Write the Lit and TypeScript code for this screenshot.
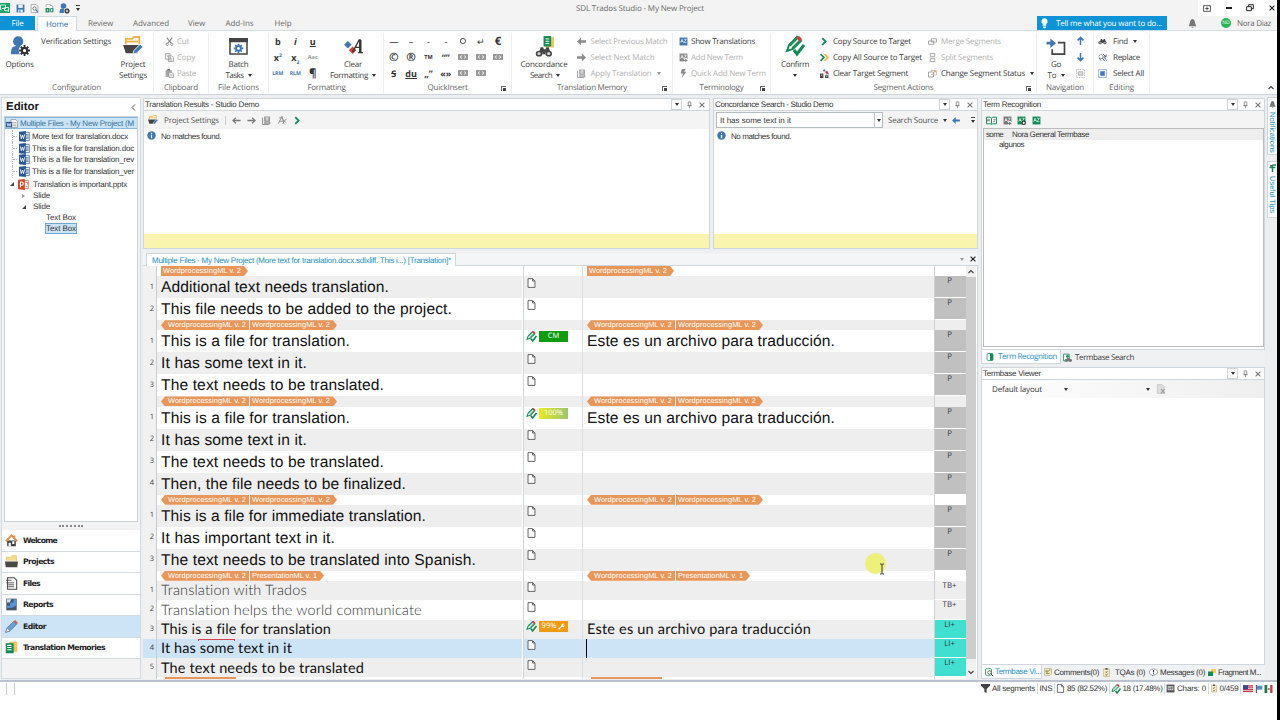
import { LitElement, css, html, svg, nothing } from 'lit';
import { customElement, property } from 'lit/decorators.js';
import { classMap } from 'lit/directives/class-map.js';

const pen = document.createElement('canvas').getContext('2d') as any;
const UI = '"Open Sans", "Noto Sans", sans-serif';
const SANS = '"Liberation Sans", Arial, sans-serif';
const SLIDE = 'Lato, sans-serif';

// Text that keeps the given width, whatever the font's own advance is
const fit = (text: string, width: number, cls = 'ui', font = `8px ${UI}`) => {
  pen.textRendering = 'geometricPrecision';
  pen.font = font;
  const gap = (width - pen.measureText(text).width) / text.length;
  return html`<span class="t ${cls}" style="width:${width}px;letter-spacing:${gap.toFixed(3)}px">${text}</span>`;
};
const small = (text: string, width: number, cls = '') => fit(text, width, 'small ' + cls, `8px ${SANS}`);

const G = '#158a57';
const B = '#3f76b3';

const binoculars = svg`<path d="M5 8 7 1h3l1 3h2l1-3h3l2 7z" fill="#444"/><circle cx="5" cy="10" r="4" fill="#444"/><circle cx="17" cy="10" r="4" fill="#444"/><circle cx="5" cy="10" r="2" fill="#ddd"/><circle cx="17" cy="10" r="2" fill="#ddd"/><path d="M9 7h4v4H9z" fill="#444"/>`;
const gear = (c: string) => svg`<circle cx="10" cy="10" r="5" fill="none" stroke=${c} stroke-width="4"/><path d="M10 0v4M10 16v4M0 10h4M16 10h4M3 3l3 3M14 14l3 3M3 17l3-3M14 6l3-3" stroke=${c} stroke-width="3.4"/>`;
const pencil = svg`<path d="M2 15 4 9 12 1l4 4-8 8z" fill="#fff" stroke="#158a57" stroke-width="2"/><path d="m5 10 7-7M7 12l7-7" stroke="#158a57" stroke-width="1.3"/><path d="m11 2 3-2 3 3-2 3z" fill="#c9413c"/><path d="m9 14 3 4 7-9" fill="none" stroke="#158a57" stroke-width="3"/>`;
const book = (c: string) => svg`<path d="M1 1h14v14H1z" fill=${c}/><path d="m3 10 2.4-6L8 10M4 8h3M9 4h4l-4 6h4" fill="none" stroke="#fff" stroke-width="1.2"/>`;
const arrowL = (c: string) => svg`<path d="M0 5 5 0v3.5h6v3H5V10z" fill=${c}/>`;
const arrowR = (c: string) => svg`<path d="M11 5 6 0v3.5H0v3h6V10z" fill=${c}/>`;

const ART: Record<string, [string, unknown]> = {
  logo: ['0 0 20 20', svg`<path d="M0 0h20v20H0z" fill="#1ba668"/><path d="M1 4h10v7H4l-3 3zM9 9h8v8l-3-2H9z" fill="#1ba668" stroke="#fff" stroke-width="1.6"/>`],
  save: ['0 0 16 16', svg`<path d="M1 1h14v14H1z" fill="#3f76b3"/><path d="M4 1h8v6H4z" fill="#f3f3f3"/><path d="M4 10h8v5H4z" fill="#f3f3f3"/><path d="M6 11h2v4H6z" fill="#3f76b3"/>`],
  preview: ['0 0 16 16', svg`<path d="M2 1h9l3 3v11H2z" fill="#fff" stroke="#777"/><circle cx="8" cy="8" r="3" fill="none" stroke="#555" stroke-width="1.4"/><path d="m10 10 4 5" stroke="#3f76b3" stroke-width="2"/>`],
  update: ['0 0 16 16', svg`<path d="M2 5V1h8l4 4v9" fill="#fff" stroke="#888"/><path d="M1 7h7v8H1z" fill="#158a57"/><path d="M3 11h3M4.5 9v4" stroke="#fff"/><path d="M10 8h4v6h-4z" fill="none" stroke="#158a57" stroke-width="1.6"/><path d="m8 4 2-2 2 2" fill="none" stroke="#3f76b3"/>`],
  user: ['0 0 22 22', svg`<circle cx="9" cy="6" r="5.6" fill="#3f76b3"/><path d="M1 20c0-9 3-9 8-9s7 1 7 9z" fill="#3f76b3"/><circle cx="16" cy="16" r="6.5" fill="#fff"/><g transform="translate(10 10) scale(.6)">${gear('#333')}</g>`],
  folder: ['0 0 22 20', svg`<path d="M3 8V2h7l2-2h6v8" fill="#fff" stroke="#e8b64a" stroke-width="2"/><path d="M2 5h15" stroke="#e8b64a" stroke-width="2"/><path d="M0 9h18l-2 9H3z" fill="#444"/><path d="m11 19 1-4 7-7 3 3-7 7z" fill="#3f76b3" stroke="#fff"/>`],
  folderNav: ['0 0 18 18', svg`<path d="M2 8V3h6l2-2h6v7" fill="#f2dc92" stroke="#e3c25e"/><path d="M0 9h18l-1 8H1z" fill="#4a4a42"/>`],
  cut: ['0 0 16 16', svg`<path d="m3 1 8 10M13 1 5 11" stroke="#777" stroke-width="2"/><circle cx="4" cy="13" r="2" fill="none" stroke="#777" stroke-width="1.5"/><circle cx="12" cy="13" r="2" fill="none" stroke="#777" stroke-width="1.5"/>`],
  copy: ['0 0 16 16', svg`<path d="M1 1h8v10H1zM6 5h6l3 3v7H6z" fill="#fff" stroke="#888" stroke-width="1.5"/><path d="M3 4h4M3 6h3M8 9h5M8 11h5M8 13h5" stroke="#888"/>`],
  paste: ['0 0 16 16', svg`<path d="M1 2h11v12H1z" fill="#999"/><path d="M4 0h5v3H4z" fill="#666"/><path d="M7 6h5l3 3v6H7z" fill="#fff" stroke="#888" stroke-width="1.5"/><path d="M9 10h4M9 12h4" stroke="#888"/>`],
  batch: ['0 0 20 18', svg`<path d="M1 1h18v16H1z" fill="#fff" stroke="#444" stroke-width="1.6"/><path d="M0 0h20v4.5H0z" fill="#444"/><g transform="translate(5 6) scale(.5)">${gear(B)}</g>`],
  clear: ['0 0 20 16', svg`<path d="m4 2 4 4-4 4-4-4z" fill="#3f76b3"/><path d="m9 8 4 4-4 4-4-4z" fill="#c9413c"/><path d="m9 14 7-13h1v13M12 9h5M15 14.5h5" fill="none" stroke="#333" stroke-width="1.4"/><path d="M16 1h2.5v13H16z" fill="#333"/>`],
  circle: ['0 0 8 8', svg`<circle cx="4" cy="4" r="2.6" fill="none" stroke="#555"/>`],
  chip: ['0 0 20 12', svg`<path d="M0 0h20v12H0z" fill="#999"/><path d="M8 3 4 6l4 3M12 3l4 3-4 3" fill="none" stroke="#fff" stroke-width="1.6"/>`],
  concord: ['0 0 20 22', svg`<path d="M11 1h9v11h-9z" fill="#efc75e"/><path d="M9 0h8v11H9z" fill="#158a57"/><path d="M11 3h4M11 5.5h4M11 8h4" stroke="#fff"/><g transform="translate(0 11) scale(.85 .75)">${binoculars}</g>`],
  binoc: ['0 0 22 14', binoculars],
  left: ['0 0 11 10', arrowL('#777')],
  right: ['0 0 11 10', arrowR('#777')],
  leftBlue: ['0 0 11 10', arrowL(B)],
  apply: ['0 0 16 16', svg`<path d="M4 1h10v9H4z" fill="#888"/><path d="M6 3h6M6 5h6M6 7h6M9 2v7" stroke="#fff"/><path d="M1 3v12h11M5 11h9v3H5z" fill="none" stroke="#777" stroke-width="1.4"/>`],
  az: ['0 0 16 16', book(B)],
  azGray: ['0 0 16 16', svg`${book('#777')}<path d="M12 9v7M9 12.5h7" stroke="#fff" stroke-width="4"/><path d="M12 10v6M9 13h6" stroke="#777" stroke-width="2"/>`],
  azGear: ['0 0 16 16', svg`${book(G)}<circle cx="12" cy="12" r="3" fill="#fff" stroke="#333" stroke-width="2"/>`],
  azGreen: ['0 0 16 16', book(G)],
  bookOpen: ['0 0 20 16', svg`<path d="M1 2h7l2 2 2-2h7v12h-7l-2 1-2-1H1zM10 4v10" fill="#fff" stroke="#158a57" stroke-width="1.8"/><path d="M3 10V6h3v4M3 8h3M13 6h4l-4 4h4" fill="none" stroke="#555"/>`],
  flash: ['0 0 16 16', svg`<path d="M5 0h7L9 5h4L5 16l2-8H3z" fill="#777"/>`],
  confirm: ['0 0 20 20', pencil],
  chev: ['0 0 16 16', svg`<path d="m4 2 6 6-6 6" fill="none" stroke="#158a57" stroke-width="3.2"/>`],
  chev2: ['0 0 16 16', svg`<path d="m8 2 6 6-6 6" fill="none" stroke="#e8b64a" stroke-width="3"/><path d="m1 2 6 6-6 6" fill="none" stroke="#158a57" stroke-width="3"/>`],
  clearSeg: ['0 0 16 16', svg`<path d="M0 8h6v8H0zM9 11h6v5H9z" fill="#444"/><path d="M2 10h2v2H2zM11 13h2v1h-2z" fill="#fff"/><path d="m5 2 3-2 2 3-3 2z" fill="#3f76b3"/><path d="m9 5 4-2 2 4-3 3z" fill="#c9413c"/><path d="m12 8 3-1 1 3z" fill="#3f76b3"/>`],
  merge: ['0 0 16 12', svg`<path d="M6 1h9v6H6zM1 5h9v6H1z" fill="#fff" stroke="#888" stroke-width="1.5"/>`],
  split: ['0 0 16 16', svg`<path d="M4 1h8v5H4zM4 10h8v5H4z" fill="#fff" stroke="#888" stroke-width="1.5"/><path d="M1 8h14" stroke="#bbb" stroke-dasharray="2 1"/>`],
  status: ['0 0 18 16', svg`<path d="M6 2h11v9H6z" fill="#fff" stroke="#999"/><path d="M1 5h10v10H1z" fill="#fff" stroke="#777" stroke-width="1.3"/><circle cx="14" cy="4" r="2" fill="#e8a04a"/><path d="M7 10h3" stroke="#777"/>`],
  goto: ['0 0 20 18', svg`<path d="M6 12v5h13V5h-7" fill="none" stroke="#444" stroke-width="1.8"/><path d="M0 4h4V.5l6 5-6 5V7H0z" fill="#3f76b3"/>`],
  up: ['0 0 12 16', svg`<path d="M6 0 12 6 10 8 7.3 5.5V15H4.7V5.5L2 8 0 6z" fill="#3f76b3"/>`],
  down: ['0 0 12 16', svg`<path d="M6 16 12 10 10 8 7.3 10.5V1H4.7v9.5L2 8 0 10z" fill="#3f76b3"/>`],
  region: ['0 0 16 16', svg`<path d="M1 1h14v14H1z" fill="none" stroke="#666" stroke-dasharray="1.5 1.5"/><path d="M4 5h8v6H4z" fill="#ddd" stroke="#888"/>`],
  selectAll: ['0 0 16 16', svg`<path d="M1 1h14v14H1z" fill="none" stroke="#3f76b3" stroke-width="1.5" stroke-dasharray="2 1.5"/><path d="M4 4h8v8H4z" fill="#3f76b3"/>`],
  replace: ['0 0 18 16', svg`<circle cx="6" cy="6" r="4" fill="none" stroke="#555" stroke-width="1.5" stroke-dasharray="3 1"/><path d="m9 9 4 6M10 1l6 6M16 2v5h-5" stroke="#555" stroke-width="1.8" fill="none"/><path d="m2 9 4 5M13 8l4 6" stroke="#3f76b3" stroke-width="2"/>`],
  bulb: ['0 0 12 18', svg`<path d="M6 0a5.5 5.5 0 0 1 3 10v3H3v-3A5.5 5.5 0 0 1 6 0zM3.5 14h5v2l-1 1h-3l-1-1z" fill="#fff"/>`],
  bell: ['0 0 16 16', svg`<path d="M8 0c5 1 4 7 6 11l1 2H1l1-2C4 7 3 1 8 0zM6 14h4l-2 2z" fill="#777"/>`],
  word: ['0 0 16 16', svg`<path d="M8 2h7v12H8z" fill="#fff" stroke="#2b579a"/><path d="M10 5h4M10 7h4M10 9h4M10 11h4" stroke="#2b579a"/><path d="M0 1 10 0v16L0 15z" fill="#2b579a"/><path d="m2 5 1.4 6L5 6l1.6 5L8 5" stroke="#fff" stroke-width="1.3" fill="none"/>`],
  wordSet: ['0 0 22 16', svg`<path d="M9 1h9l3 3v11H9z" fill="#fff" stroke="#666"/><path d="M11 6h8M11 9h8M11 12h8" stroke="#777"/><path d="M0 5h11v10H0z" fill="#2b579a"/><path d="m2 7 1.6 6L5.5 8l2 5L9 7" stroke="#fff" stroke-width="1.3" fill="none"/>`],
  ppt: ['0 0 16 16', svg`<path d="M8 2h7v12H8z" fill="#fff" stroke="#d24726"/><path d="M11 5h3v3M11 11h3" stroke="#d24726" fill="none"/><path d="M0 1 10 0v16L0 15z" fill="#d24726"/><path d="M3.5 12V4.5h2a2 2 0 0 1 0 4.5h-2" stroke="#fff" stroke-width="1.5" fill="none"/>`],
  info: ['0 0 16 16', svg`<circle cx="8" cy="8" r="7.5" fill="#3f76b3"/><path d="M8 6.5V13M8 3v2.2" stroke="#fff" stroke-width="2.2"/>`],
  arrowThinL: ['0 0 14 12', svg`<path d="M6 1 1 6l5 5M1 6h13" fill="none" stroke="#777" stroke-width="2.2"/>`],
  arrowThinR: ['0 0 14 12', svg`<path d="m8 1 5 5-5 5M13 6H0" fill="none" stroke="#777" stroke-width="2.2"/>`],
  crossA: ['0 0 16 16', svg`<path d="M2 14 8 2l3 12M4 10h7M3 5c3-2 5 0 11 7M9 14l6-8" fill="none" stroke="#888" stroke-width="1.4"/>`],
  pin: ['0 0 8 12', svg`<path d="M2 1h4v6H2zM0.5 7h7M4 7v4" fill="none" stroke="#777" stroke-width="1.2"/>`],
  close: ['0 0 10 10', svg`<path d="m1 1 8 8M9 1 1 9" stroke="currentColor" stroke-width="1.9"/>`],
  home: ['0 0 18 18', svg`<path d="M3 9h12v8H3z" fill="#444"/><path d="M10 10h3v4h-3zM5 12h3v5H5z" fill="#fff"/><path d="m1 10 8-8 8 8M13 2v4" fill="none" stroke="#e2904f" stroke-width="2.6"/>`],
  files: ['0 0 18 20', svg`<path d="M3 1h10l4 4v14H3z" fill="#fff" stroke="#444" stroke-width="1.6"/><path d="M1 5h8M1 9h12M4 12h9M4 15h9" stroke="#444" stroke-width="1.3"/>`],
  reports: ['0 0 18 20', svg`<path d="M1 1h16v18H1z" fill="#45566b"/><path d="M1 12h6V7h5V2h5v9l-7 4H1z" fill="#5a93d4"/><path d="M2 2h7l-3 5H2z" fill="#cfe0f2"/>`],
  editor: ['0 0 18 18', svg`<path d="m1 17 2-6L12 2l4 4-9 9z" fill="#6d9fd2" stroke="#3f6da5"/><path d="m3 11 4 4-6 2z" fill="#eee" stroke="#666" stroke-width=".7"/><path d="m12 2 2-2 4 4-2 2z" fill="#d55a4f"/>`],
  memories: ['0 0 18 18', svg`<path d="M6 1h11v14H6z" fill="#efc75e"/><path d="M1 3h11v14H1z" fill="#158a57"/><path d="M3 6h6M3 9h6M3 12h6" stroke="#fff" stroke-width="1.5"/>`],
  page: ['0 0 9 11', svg`<path d="M.7.7h5l2.6 2.6v7H.7zM5.7.7v2.6h2.6" fill="#fff" stroke="#555"/>`],
  wrench: ['0 0 10 10', svg`<path d="m1 9 5-5" stroke="#fff" stroke-width="2"/><path d="M9 1 7 3l1 1 2-1a3 3 0 0 1-5 2 3 3 0 0 1 4-4z" fill="#fff"/>`],
  term: ['0 0 14 16', svg`<path d="M1 3c0-3 12-3 12 0v10c0 3-12 3-12 0z" fill="#fff" stroke="#158a57" stroke-width="1.5"/><path d="M7 1h6v14H7z" fill="#158a57"/>`],
  termSearch: ['0 0 16 16', svg`<path d="M1 2h10v12H1z" fill="#fff" stroke="#158a57" stroke-width="1.5"/><circle cx="8" cy="6" r="2.5" fill="#158a57"/><circle cx="6" cy="13" r="3" fill="#777"/><circle cx="13" cy="13" r="3" fill="#777"/><path d="M7 9h5v4H7z" fill="#777"/>`],
  viewer: ['0 0 16 16', svg`<path d="M1 3c0-3 12-3 12 0v10c0 3-12 3-12 0z" fill="#fff" stroke="#158a57" stroke-width="1.6"/><circle cx="9" cy="9" r="3.5" fill="#fff" stroke="#444" stroke-width="1.5"/><path d="m12 12 4 4" stroke="#444" stroke-width="2"/>`],
  note: ['0 0 16 16', svg`<path d="M1 1h14v11l-3 3H1z" fill="#f6e9ae" stroke="#999"/><path d="M4 4v4h4V4M10 4h3M4 11h7" stroke="#555" fill="none" stroke-width="1.3"/>`],
  tqa: ['0 0 12 16', svg`<path d="M1 2h10v13H1z" fill="#f9f0cf" stroke="#b59a4a"/><path d="M4 0h4v3H4z" fill="#555"/><path d="m4 7 2 1 2-3M4 12l2 1 2-3" fill="none" stroke="#444" stroke-width="1.2"/>`],
  message: ['0 0 18 16', svg`<path d="M9 1c11 0 10 12 1 12l-3 2v-2C-2 12-1 1 9 1z" fill="#fff" stroke="#666" stroke-width="1.2"/><path d="M9 3v5M9 9.5v2" stroke="#333" stroke-width="2"/>`],
  fragment: ['0 0 16 14', svg`<path d="M6 0h10v8H6z" fill="#f0cf52"/><path d="M0 5h10v9H0z" fill="#158a57"/>`],
  filter: ['0 0 16 16', svg`<path d="M0 0h16v3l-6 6v7l-4-2V9L0 3z" fill="#444"/>`],
  chars: ['0 0 16 16', svg`<path d="M1 1h14v14H1z" fill="#555"/><path d="M3 4h10v7H3z" fill="#ddd"/><path d="M5 6v3h2V6M9 6h2v3H9z" stroke="#333" fill="none"/>`],
  us: ['0 0 16 12', svg`<path d="M0 0h16v12H0z" fill="#f6dfe2"/><path d="M0 1h16M0 4h16M0 7h16M0 10h16" stroke="#c8394b" stroke-width="1.8"/><path d="M0 0h8v6.5H0z" fill="#3a4a8c"/>`],
  flagArrow: ['0 0 10 12', svg`<path d="M1 0v12" stroke="#444" stroke-width="1.5"/><path d="M2 1h8v6H2z" fill="#5a8ccc"/>`],
  mx: ['0 0 12 12', svg`<path d="M0 0h4.5v12H0z" fill="#1b7a4b"/><path d="M4.5 0h4v12h-4z" fill="#fff"/><path d="M8.5 0H12v12H8.5z" fill="#c8394b"/><circle cx="6.4" cy="6" r="1.5" fill="#8a6a3a"/>`],
  tips: ['0 0 12 14', svg`<path d="M6 14V2M6 2h6M6 6H1M6 6h5" stroke="#158a57" stroke-width="2.5"/><path d="M2 2h3v3H2z" fill="#555"/>`],
  ribbonOpt: ['0 0 14 12', svg`<path d="M1 1h12v10H1zM4 6h6M7 3v6" fill="none" stroke="#333" stroke-width="1.4"/>`],
  restore: ['0 0 12 12', svg`<path d="M4 4V1h7v6H8M1 4h7v6H1z" fill="none" stroke="#222" stroke-width="1.5"/>`],
  pageX: ['0 0 16 16', svg`<path d="M2 1h8l3 3v11H2z" fill="#ddd" stroke="#bbb"/><path d="m8 8 6 7M14 8l-6 7" stroke="#999" stroke-width="1.8"/>`],
  chevUp: ['0 0 6 5', svg`<path d="M.5 4 3 1.5 5.5 4" fill="none" stroke="#444" stroke-width="1.2"/>`],
  chevDown: ['0 0 6 5', svg`<path d="M.5 1 3 3.5 5.5 1" fill="none" stroke="#444" stroke-width="1.2"/>`],
  chevLeft: ['0 0 5 7', svg`<path d="M4 .5 1 3.5l3 3" fill="none" stroke="#444"/>`],
};

@customElement('ui-icon')
export class UiIcon extends LitElement {
  @property() name = '';
  @property({ type: Number }) w = 9;
  @property({ type: Number }) h = 9;

  static styles = css`
    :host { display: inline-flex; flex: none; }
    svg { display: block; overflow: visible; }
  `;

  render() {
    const art = ART[this.name];
    if (!art) return nothing;
    return html`<svg width=${this.w} height=${this.h} viewBox=${art[0]}>${art[1]}</svg>`;
  }
}

const icon = (name: string, w = 9, h = w) => html`<ui-icon name=${name} w=${w} h=${h}></ui-icon>`;
const caret = html`<i class="caret"></i>`;
const row = (name: string, text: string, w: number, off = false, drop = false) => html`
  <div class=${classMap({ cmd: true, off })}><span class="slot">${icon(name, 9)}</span>${fit(text, w)}${drop ? caret : nothing}</div>`;

type Seg = { n?: number; src?: string; sw?: number; dst?: string; dw?: number; tag?: string[]; st?: string; slide?: boolean; light?: boolean; active?: boolean; match?: string };
const WML = 'WordprocessingML v. 2';
const PML = 'PresentationML v. 1';
const SEGMENTS: Seg[] = [
  { tag: [WML] },
  { n: 1, src: 'Additional text needs translation.', sw: 228, st: 'P' },
  { n: 2, src: 'This file needs to be added to the project.', sw: 291, st: 'P' },
  { tag: [WML, WML] },
  { n: 1, src: 'This is a file for translation.', sw: 189, dst: 'Este es un archivo para traducción.', dw: 248, st: 'P', match: 'CM' },
  { n: 2, src: 'It has some text in it.', sw: 146, st: 'P' },
  { n: 3, src: 'The text needs to be translated.', sw: 223, st: 'P' },
  { tag: [WML, WML] },
  { n: 1, src: 'This is a file for translation.', sw: 189, dst: 'Este es un archivo para traducción.', dw: 248, st: 'P', match: '100%' },
  { n: 2, src: 'It has some text in it.', sw: 146, st: 'P' },
  { n: 3, src: 'The text needs to be translated.', sw: 223, st: 'P' },
  { n: 4, src: 'Then, the file needs to be finalized.', sw: 245, st: 'P' },
  { tag: [WML, WML] },
  { n: 1, src: 'This is a file for immediate translation.', sw: 265, st: 'P' },
  { n: 2, src: 'It has important text in it.', sw: 174, st: 'P' },
  { n: 3, src: 'The text needs to be translated into Spanish.', sw: 315, st: 'P' },
  { tag: [WML, PML] },
  { n: 1, src: 'Translation with Trados', sw: 146, st: 'TB+', slide: true, light: true },
  { n: 2, src: 'Translation helps the world communicate', sw: 261, st: 'TB+', slide: true, light: true },
  { n: 3, src: 'This is a file for translation', sw: 170, dst: 'Este es un archivo para traducción', dw: 224, st: 'LI+', slide: true, match: '99%' },
  { n: 4, src: 'It has some text in it', sw: 131, st: 'LI+', slide: true, active: true },
  { n: 5, src: 'The text needs to be translated', sw: 203, st: 'LI+', slide: true },
  { tag: [] },
];

const MATCH_CLASS: Record<string, string> = { CM: 'cm', '100%': 'full', '99%': 'fuzzy' };

@customElement('app-root')
export class AppRoot extends LitElement {
  static styles = css`
    :host {
      display: grid; grid-template: 95px 587px 38px / minmax(0, 1fr); width: 1280px; height: 720px; overflow: hidden;
      box-sizing: border-box; border-right: 3px solid #000; background: #fff; color: #3a3a3a; position: relative;
      font: 8px/11px "Open Sans", "Noto Sans", sans-serif; text-rendering: geometricPrecision;
    }
    * { box-sizing: border-box; }
    .t { display: inline-block; white-space: pre; flex: none; }
    .small { font: 8px/11px "Liberation Sans", Arial, sans-serif; color: #333; }
    .caret { width: 0; height: 0; border: 2px solid transparent; border-top: 3px solid #333; border-bottom: 0; margin-left: 5px; flex: none; }

    .title { height: 16px; background: #f3f3f3; display: grid; grid-template-columns: 576px 1fr 79px; }
    .quick { display: flex; align-items: center; gap: 5.5px; }
    .name { display: flex; align-items: center; color: #6c6c6c; }
    .win { background: #fff; display: flex; align-items: center; justify-content: space-between; padding: 0 2px 0 5px; color: #222; }
    .win b { width: 6px; height: 1.5px; background: #222; }
    .more { border-top: 1px solid #444; padding-top: 1.5px; }
    .more .caret { display: block; margin: 0; }
    .tabs { height: 15px; background: #f3f3f3; border-bottom: 1px solid #d5dde2; display: flex; align-items: stretch; color: #6c6c6c; }
    .tabs > div { display: flex; justify-content: center; align-items: center; }
    .tabs .file { width: 35px; background: #0e93d6; color: #fff; }
    .tabs .home { width: 40px; margin: 0 0 0 2px; background: #fff; border: 1px solid #cfd9e0; border-bottom: 0; color: #2f6fa8; height: 15px; }
    .w48 { width: 47px; } .w54 { width: 54px; } .w37 { width: 37px; } .w49 { width: 49px; } .w38 { width: 38px; }
    .tabs .tell { width: 130px; margin-left: 735px; background: #0e93d6; color: #fff; gap: 8px; justify-content: flex-start; padding-left: 4px; }
    .tabs .bell { width: 50px; }
    .tabs .me { gap: 6px; padding-left: 4px; color: #666; }
    .avatar { width: 10px; height: 10px; border-radius: 5px; background: #2bb457; color: #fff; font-size: 5px; line-height: 10px; text-align: center; }

    .ribbon { height: 64px; background: #fff; border-bottom: 1px solid #cdd3d8; padding-top: 2px; display: flex; position: relative; }
    .group { display: grid; grid-template-rows: 48px 12px; border-right: 1px solid #eceef0; height: 60px; }
    .body { display: grid; }
    .label { color: #666; text-align: center; position: relative; line-height: 14px; }
    .launch { position: absolute; right: 5px; top: 5px; width: 5px; height: 5px; border-top: 1px solid #666; border-left: 1px solid #666; background: linear-gradient(#444, #444) 100% 100% / 3px 3px no-repeat; }
    .config { width: 154px; } .config .body { grid-template-columns: 39px 74px 40px; }
    .clip { width: 55px; } .clip .body { padding-left: 11px; }
    .act { width: 60px; }
    .fmt { width: 115px; } .fmt .body { grid-template-columns: 53px 62px; }
    .qi { width: 128px; }
    .tm { width: 161px; } .tm .body { grid-template-columns: 64px 1fr; }
    .seg .slot { width: 13px; }
    .tm .slot { width: 14px; }
    .term { width: 98px; } .term .body { padding-left: 6px; }
    .seg { width: 266px; } .seg .body { grid-template-columns: 48px 108px 1fr; }
    .seg .rows { padding-left: 1px; }
    .nav { width: 57px; } .nav .body { grid-template-columns: 38px 10px; }
    .edit { width: 56px; } .edit .body { padding-left: 4px; } .edit .slot { width: 15px; }
    .rows { display: grid; grid-template-rows: 16px 16px 16px; align-items: center; }
    .tm .rows { padding-left: 1px; }
    .cmd { display: flex; align-items: center; }
    .cmd .slot { width: 12px; display: flex; }
    .edit .cmd .slot { width: 15px; }
    .seg .cmd .slot, .tm .cmd .slot { width: 13px; }
    .tm .cmd .t { margin-left: .5px; }
    .off { color: #b2b2b2; } .off .slot { opacity: .85; } .off .caret { border-top-color: #999; }
    .big { display: grid; grid-template-rows: 26px 11px 11px; justify-items: center; }
    .big > ui-icon { align-self: center; }
    .big > div { display: flex; align-items: center; height: 11px; }
    .big > div .caret { margin-left: 4px; }
    .big > div .caret:only-child { margin: 0; }
    .glyphs { display: grid; grid-template-rows: 16px 16px 16px; place-items: center; color: #333; font-size: 9px; }
    .g3 { grid-template-columns: repeat(3, 17.5px); }
    .g7 { grid-template-columns: repeat(7, 17.4px); padding-left: 1px; justify-content: start; }
    .glyphs .tiny { font-size: 5.5px; font-weight: 700; }
    .glyphs .lrm { color: #3f76b3; font-size: 5.2px; }
    .glyphs .aac { color: #999; }
    .glyphs sup, .glyphs sub { font-size: 5px; line-height: 0; color: #3f76b3; }
    .glyphs .big-g { font-size: 11.5px; }
    .arrows { display: grid; grid-template-rows: 16px 16px 16px; place-items: center; }
    .fold { position: absolute; right: 3px; bottom: 4px; display: flex; }

    .work { background: #eceef0; display: grid; grid-template-columns: 141px 837px 288px 11px; border-bottom: 2px solid #b9c3cf; padding: 2px 0 1px; }
    .side { background: #f3f3f3; margin-left: 1px; border: 1px solid #d3dae0; display: grid; grid-template-rows: 18px 406px 8px repeat(6, 21.5px) 1fr; }
    .side-head { background: #fff; display: flex; justify-content: space-between; align-items: center; padding: 0 4px 0 4px; }
    .bold12 { font: bold 11.5px/14px "Liberation Sans", Arial, sans-serif; color: #1a1a1a; }
    .tree { background: #fff; border: 1px solid #c9d0d6; margin: 0 2px; overflow: hidden; padding-top: .4px; }
    .node { height: 11.8px; display: flex; align-items: center; gap: 3px; }
    .node.root { background: #cbe4f5; border: 1px solid #86b9dc; height: 12px; margin: 0 -1px 1px 0; gap: 2px; }
    .node.root .t { color: #38729c; }
    .node.doc { padding-left: 5px; margin-left: 7px; border-left: 1px dotted #bbb; gap: 2px; }
    .node.doc::before { content: ''; width: 4px; margin-left: -5px; border-top: 1px dotted #bbb; }
    .node.ppt { padding-left: 5px; gap: 4px; height: 13px; }
    .node.slide { padding-left: 17px; height: 10.8px; gap: 7px; }
    .node.box { padding-left: 41px; height: 10.6px; }
    .node .pick { background: #cbe4f5; outline: 1px solid #6ea7cf; line-height: 9px; }
    .open { border-left: 4px solid transparent; border-bottom: 4px solid #444; }
    .shut { border: 2px solid transparent; border-left: 3px solid #999; border-right: 0; margin: 0 1px 0 0; }
    .dots { display: flex; justify-content: center; align-items: center; }
    .dots i { width: 24px; border-top: 2px dotted #888; }
    .navi { background: #fff; border-bottom: 1px solid #d3dae0; display: flex; align-items: center; padding-left: 3px; gap: 5px; }
    .navi.on { background: #cde4f6; }
    .navt { font: bold 7.7px/11px "DejaVu Sans", sans-serif; color: #222; }

    .mid { display: grid; grid-template-rows: 151px 4px 1fr; padding: 1px 0 0 2px; }
    .panes { display: grid; grid-template-columns: 567px 265px; gap: 3px; }
    .pane { background: #fff; border: 1px solid #d0d7dc; display: grid; grid-template-columns: minmax(0, 1fr); align-content: start; }
    .pane.fill { grid-template-rows: 12px 18px 1fr 14px; align-content: stretch; }
    .cap { height: 12px; border-bottom: 1px solid #d0d7dc; background: #fff; display: flex; align-items: center; padding-left: 1px; }
    .cap .btns { margin-left: auto; display: flex; align-items: center; gap: 7px; padding-right: 4px; color: #777; }
    .right .cap .btns { padding-right: 3px; }
    .drop { width: 11px; height: 11px; border: 1px solid #d0d7dc; display: flex; align-items: center; justify-content: center; margin-right: -2px; }
    .drop .caret { margin: 0; }
    .bar { background: #f4f4f4; display: flex; align-items: center; height: 18px; }
    .bar.res { padding-left: 4px; gap: 6px; color: #555; }
    .bar.res .sep { height: 9px; border-left: 1px solid #ccc; }
    .none { display: flex; align-items: flex-start; gap: 5px; padding: 2px 0 0 3px; }
    .yellow { background: #f9f4ae; }
    .bar.con { padding-left: 2px; color: #555; }
    .input { width: 167px; height: 16px; border: 1px solid #b5bcc2; background: #fff; display: flex; align-items: center; padding-left: 3px; }
    .input .dd { margin-left: auto; width: 8px; height: 14px; border-left: 1px solid #c5c5c5; display: flex; align-items: center; justify-content: center; }
    .input .dd .caret { margin: 0; }
    .bar.con .t + .caret { margin: 0 4px 0 5px; }
    .bar.con > .t { margin-left: 5px; }
    .bar.con .more { margin-left: auto; margin-right: 2px; }

    .doc-tabs { height: 13px; display: flex; background: #f4f5f6; border-bottom: 1px solid #d0d7dc; }
    .doc-tab { background: #fff; border: 1px solid #d0d7dc; border-bottom: 0; width: 310px; margin-left: 3px; height: 13px; padding-left: 5px; display: flex; align-items: center; }
    .doc-tab .t, .blue { color: #2490bb; }
    .doc-tabs .end { margin-left: auto; display: flex; align-items: center; gap: 6px; padding-right: 2px; color: #222; }
    .end .caret { border-top-color: #999; }
    .sheet { height: 413px; display: grid; grid-template-columns: 823px 10px; background: #fff; overflow: hidden; border-right: 1px solid #d0d7dc; position: relative; }
    .segs { overflow: hidden; height: 413px; }
    .sr { height: 22px; display: grid; grid-template-columns: 14px 365px 2px 59px 351px 32px; background: #fff; }
    .sr.alt { background: #eee; }
    .sr.slide { height: 19.3px; }
    .sr.tagrow { height: 10.2px; }
    .num { border-right: 1px solid #c8ccd0; background: #f1f1f1; display: flex; align-items: center; justify-content: flex-end; padding-right: 2px; font-size: 7.5px; color: #444; }
    .active .num { background: #cde3f6; }
    .sr.active { background: #cde3f6; }
    .src, .dst { display: flex; align-items: center; padding-left: 4px; color: #111; }
    .vline { border-left: 1px solid #fff; border-right: 1px solid #ccd8e0; background: #fff; }
    .stat { border-right: 1px solid #d8dfe4; display: flex; align-items: flex-start; padding: 1px 0 0 2px; gap: 2px; }
    .stat > ui-icon:only-child { margin: .5px 0 0 1px; }
    .arial { font: 15.6px/22px "Liberation Sans", Arial, sans-serif; position: relative; top: 1px; }
    .cali { font: 14.5px/19px Lato, sans-serif; position: relative; top: .4px; }
    .cali.light { font-weight: 300; color: #333; }
    .badge { width: 29px; height: 11px; color: #fff; font-size: 7.5px; line-height: 11px; text-align: center; display: flex; justify-content: center; align-items: center; gap: 2px; }
    .cm { background: #109c10; }
    .full { background: linear-gradient(90deg, #e9ec1d, #9cc470); }
    .fuzzy { background: #f09a10; }
    .p { border-left: 1px solid #d0d0d0; text-align: center; font-size: 7.8px; line-height: 10px; color: #334; padding-right: 2px; }
    .p.st { background: #c0c0c0; border-bottom: 1px solid #fff; }
    .p.tb { background: #eee; }
    .p.li { background: #40dfcf; }
    .tag { height: 10px; background: #e8965a; color: #fff; display: flex; align-items: center; }
    .tag .t { font: 7.4px/10px "Liberation Sans", Arial, sans-serif; color: #fff; }
    .tag.r { padding: 0 7px 0 2px; clip-path: polygon(0 0, calc(100% - 4px) 0, 100% 50%, calc(100% - 4px) 100%, 0 100%); }
    .tag.l { padding: 0 3px 0 7px; margin-right: 1px; clip-path: polygon(4px 0, 100% 0, 100% 100%, 4px 100%, 0 50%); }
    .stub { width: 71px; height: 10px; margin-left: 4px; background: #e8965a; align-self: start; }
    .text-cursor { width: 1px; height: 19px; background: #000; margin-left: -1px; }
    .mark { border: 1px solid #d4404c; border-bottom: 0; position: absolute; left: 55px; top: 373px; width: 37px; height: 2px; }
    .scroll { background: #cdcdcd; display: grid; grid-template-rows: 11px 1fr 20px; color: #444; }
    .scroll div { background: #f1f1f1; display: flex; align-items: center; justify-content: center; }
    .scroll div:last-child { align-items: flex-end; padding-bottom: 4px; }

    .right { display: grid; grid-template: 252px 14px 3px 298px 14px / minmax(0, 1fr); padding: 1px 1px 0 3px; }
    .bar.rec { padding-left: 4px; gap: 5.5px; }
    .list { border: 1px solid #bbb; height: 219px; margin: -1px 0 0 1px; }
    .hit { background: #eee; height: 11px; display: flex; align-items: center; gap: 9px; padding-left: 2px; }
    .sub { padding-left: 15px; display: flex; height: 9px; align-items: center; }
    .foot { display: flex; align-items: center; background: #f0f1f2; }
    .foot > div { display: flex; align-items: center; height: 14px; }
    .foot .sel { background: #fff; border: 1px solid #d0d7dc; border-top: 0; }
    .rt .sel { padding: 0 3px 0 4px; gap: 4px; }
    .rt .find { padding-left: 2px; gap: 3px; }
    .bt .view { padding: 0 0 0 3px; gap: 2px; }
    .bt .com { padding-left: 2px; gap: 2px; }
    .bt .qa { padding-left: 4px; gap: 5px; }
    .bt .msg { padding-left: 4px; gap: 2px; }
    .bt .frag { padding-left: 3px; gap: 2px; }
    .bar.view { padding-left: 10px; background: linear-gradient(90deg, #fff, #efefef); }
    .bar.view .c1 { margin-left: 17px; display: flex; }
    .bar.view .c2 { margin: 0 6px 0 73px; display: flex; }
    .strip { display: grid; grid-template: 58px 57px / 11px; gap: 6px; align-content: start; padding-left: 1px; overflow: hidden; }
    .vtab { background: #fff; border: 1px solid #d0d7dc; border-right: 0; display: grid; grid-template: 12px 1fr / 9px; justify-items: center; align-items: center; }
    .vt { writing-mode: vertical-rl; font: 7.5px/9px "Liberation Sans", Arial, sans-serif; white-space: nowrap; align-self: start; margin-top: 2px; }

    .statusbar { display: flex; align-items: flex-start; padding-top: 1px; }
    .ticks { display: flex; width: 980px; height: 12px; padding-left: 6px; gap: 7px; flex: none; }
    .ticks i { border-left: 1px solid #ccc; }
    .cell { display: flex; align-items: center; height: 11px; gap: 2px; border-right: 1px solid #d8d8d8; padding: 0 1.5px 0 1px; flex: none; }
    .cell.ins { padding-left: 2px; }
    .cell.qa { gap: 3px; padding-left: 2px; }
    .cell:last-child { border: 0; padding: 0 0 0 2px; gap: 1.5px; }
    .halo { position: absolute; left: 865px; top: 553px; width: 21px; height: 21px; border-radius: 50%; background: #eef07c; }
    .beam { position: absolute; left: 879px; top: 563px; display: flex; }
  `;

  group(cls: string, body: unknown, label: string, w: number, launch = false) {
    return html`<div class="group ${cls}"><div class="body">${body}</div>
      <div class="label">${fit(label, w)}${launch ? html`<i class="launch"></i>` : nothing}</div></div>`;
  }

  caption(title: string, w: number) {
    return html`<div class="cap">${small(title, w)}
      <span class="btns"><span class="drop">${caret}</span>${icon('pin', 5, 8)}${icon('close', 6)}</span></div>`;
  }

  top() {
    const chip = icon('chip', 10, 6);
    return html`<header>
      <div class="title">
        <div class="quick">${icon('logo', 10)}${icon('save', 9)}${icon('preview', 9)}${icon('update', 9)}${icon('user', 11)}<span class="more">${caret}</span></div>
        <div class="name">${fit('SDL Trados Studio - My New Project', 128)}</div>
        <div class="win">${icon('ribbonOpt', 8, 7)}<b></b>${icon('restore', 8)}${icon('close', 6)}</div>
      </div>
      <div class="tabs">
        <div class="file">${fit('File', 12)}</div>
        <div class="home">${fit('Home', 22)}</div>
        <div class="w48">${fit('Review', 25)}</div>
        <div class="w54">${fit('Advanced', 36)}</div>
        <div class="w37">${fit('View', 17)}</div>
        <div class="w49">${fit('Add-Ins', 28)}</div>
        <div class="w38">${fit('Help', 17)}</div>
        <div class="tell">${icon('bulb', 7, 11)}${fit('Tell me what you want to do...', 106)}</div>
        <div class="bell">${icon('bell', 9)}</div>
        <div class="me"><span class="avatar">ND</span>${fit('Nora Diaz', 34)}</div>
      </div>
      <div class="ribbon">
        ${this.group('config', html`
          <div class="big">${icon('user', 20)}${fit('Options', 28)}</div>
          <div class="rows"><div class="cmd">&nbsp;${fit('Verification Settings', 70)}</div></div>
          <div class="big">${icon('folder', 20, 18)}${fit('Project', 25)}${fit('Settings', 28)}</div>`, 'Configuration', 49)}
        ${this.group('clip', html`<div class="rows">${row('cut', 'Cut', 12, true)}${row('copy', 'Copy', 18, true)}${row('paste', 'Paste', 19, true)}</div>`, 'Clipboard', 34)}
        ${this.group('act', html`<div class="big">${icon('batch', 19, 17)}${fit('Batch', 20)}<div>${fit('Tasks', 18)}${caret}</div></div>`, 'File Actions', 41)}
        ${this.group('fmt', html`
          <div class="glyphs g3"><b>b</b><b><i>i</i></b><b><u>u</u></b>
            <b>x<sup>2</sup></b><b>x<sub>2</sub></b><span class="tiny aac">Aac</span>
            <span class="tiny lrm">LRM</span><span class="tiny lrm">RLM</span><b class="big-g">¶</b></div>
          <div class="big">${icon('clear', 19, 15)}${fit('Clear', 18)}<div>${fit('Formatting', 38)}${caret}</div></div>`, 'Formatting', 38)}
        ${this.group('qi', html`<div class="glyphs g7">
          <span>—</span><span>–</span><span>-</span><span>‑</span>${icon('circle', 8)}<span>↵</span><b class="big-g">€</b>
          <b class="big-g">©</b><b class="big-g">®</b><span class="tiny">TM</span><b>“”</b>${chip}${chip}${chip}
          <b><s>S</s></b><b><u>du</u></b><b>„”</b><b>«»</b>${chip}${chip}</div>`, 'QuickInsert', 40, true)}
        ${this.group('tm', html`
          <div class="big">${icon('concord', 19, 21)}${fit('Concordance', 47)}<div>&nbsp;${fit('Search', 22)}${caret}</div></div>
          <div class="rows">${row('left', 'Select Previous Match', 77, true)}${row('right', 'Select Next Match', 64, true)}${row('apply', 'Apply Translation', 61, true, true)}</div>`, 'Translation Memory', 70, true)}
        ${this.group('term', html`<div class="rows">${row('az', 'Show Translations', 64)}${row('azGray', 'Add New Term', 52, true)}${row('flash', 'Quick Add New Term', 75, true)}</div>`, 'Terminology', 44, true)}
        ${this.group('seg', html`
          <div class="big">${icon('confirm', 20)}${fit('Confirm', 28)}<div>${caret}</div></div>
          <div class="rows">${row('chev', 'Copy Source to Target', 78)}${row('chev2', 'Copy All Source to Target', 89)}${row('clearSeg', 'Clear Target Segment', 75)}</div>
          <div class="rows">${row('merge', 'Merge Segments', 60, true)}${row('split', 'Split Segments', 52, true)}${row('status', 'Change Segment Status', 84, false, true)}</div>`, 'Segment Actions', 60, true)}
        ${this.group('nav', html`
          <div class="big">${icon('goto', 20, 17)}${fit('Go', 10)}<div>${fit('To', 9)}${caret}</div></div>
          <div class="arrows">${icon('up', 7, 10)}${icon('down', 7, 10)}${icon('region', 9)}</div>`, 'Navigation', 38)}
        ${this.group('edit', html`<div class="rows">${row('binoc', 'Find', 15, false, true)}${row('replace', 'Replace', 27)}${row('selectAll', 'Select All', 31)}</div>`, 'Editing', 25)}
        <span class="fold">${icon('chevUp', 6, 5)}</span>
      </div>
    </header>`;
  }

  side() {
    const docs: [string, number][] = [['More text for translation.docx', 96], ['This is a file for translation.doc', 102], ['This is a file for translation_rev', 102], ['This is a file for translation_ver', 102]];
    const nav: [string, string, number][] = [['home', 'Welcome', 34], ['folderNav', 'Projects', 31], ['files', 'Files', 17], ['reports', 'Reports', 30], ['editor', 'Editor', 23], ['memories', 'Translation Memories', 82]];
    return html`<aside class="side">
      <div class="side-head">${fit('Editor', 33, 'bold12', `bold 11.5px ${SANS}`)}${icon('chevLeft', 5, 7)}</div>
      <div class="tree">
        <div class="node root">${icon('wordSet', 12, 9)}${small('Multiple Files - My New Project (M', 114)}</div>
        ${docs.map(([name, w]) => html`<div class="node doc">${icon('word', 11)}${small(name, w)}</div>`)}
        <div class="node ppt"><i class="open"></i>${icon('ppt', 11)}${small('Translation is important.pptx', 94)}</div>
        <div class="node slide"><i class="shut"></i>${small('Slide', 17)}</div>
        <div class="node slide"><i class="open"></i>${small('Slide', 17)}</div>
        <div class="node box">${small('Text Box', 30)}</div>
        <div class="node box">${small('Text Box', 30, 'pick')}</div>
      </div>
      <div class="dots"><i></i></div>
      ${nav.map(([pic, name, w]) => html`<div class=${classMap({ navi: true, on: name === 'Editor' })}>${icon(pic, 13)}${fit(name, w, 'navt', 'bold 7.7px "DejaVu Sans"')}</div>`)}
    </aside>`;
  }

  tags(names: string[]) {
    return names.map((name, i) => html`<span class="tag ${i === names.length - 1 ? 'r' : 'l'}">${fit(name, name === WML ? 78 : 65, '', `7.4px ${SANS}`)}</span>`);
  }

  segment(s: Seg, i: number) {
    const write = (text: string, w: number) => s.slide
      ? fit(text, w, s.light ? 'cali light' : 'cali', `${s.light ? '300 ' : ''}14.5px ${SLIDE}`)
      : fit(text, w, 'arial', `15.6px ${SANS}`);
    const cls = { sr: true, alt: i % 2 === 1, slide: !!s.slide, tagrow: !!s.tag, active: !!s.active };
    const tags = s.tag ? (s.tag.length ? this.tags(s.tag) : html`<span class="stub"></span>`) : nothing;
    return html`<div class=${classMap(cls)}>
      <div class="num">${s.n}</div>
      <div class="src">${s.src ? write(s.src, s.sw!) : tags}</div>
      <div class="vline"></div>
      <div class="stat">${s.tag ? nothing : s.match
        ? html`${icon('confirm', 11)}<span class="badge ${MATCH_CLASS[s.match]}">${s.match}${s.match === '99%' ? icon('wrench', 7) : nothing}</span>`
        : icon('page', 9, 10)}</div>
      <div class="dst">${s.active ? html`<i class="text-cursor"></i>` : s.dst ? write(s.dst, s.dw!) : tags}</div>
      <div class=${classMap({ p: true, st: !!s.st, tb: s.st === 'TB+', li: s.st === 'LI+' })}>${s.st ?? nothing}</div>
    </div>`;
  }

  middle() {
    return html`<main class="mid">
      <div class="panes">
        <section class="pane fill">
          ${this.caption('Translation Results - Studio Demo', 114)}
          <div class="bar res">${icon('folder', 10)}${fit('Project Settings', 55)}<i class="sep"></i>${icon('arrowThinL', 9, 7)}${icon('arrowThinR', 9, 7)}${icon('apply', 9)}${icon('crossA', 10)}${icon('chev', 9)}</div>
          <div class="none">${icon('info', 9)}${small('No matches found.', 60)}</div>
          <div class="yellow"></div>
        </section>
        <section class="pane fill">
          ${this.caption('Concordance Search - Studio Demo', 118)}
          <div class="bar con"><div class="input">${small('It has some text in it', 71)}<span class="dd">${caret}</span></div>${fit('Search Source', 50)}${caret}${icon('leftBlue', 10, 7)}<span class="more">${caret}</span></div>
          <div class="none">${icon('info', 9)}${small('No matches found.', 60)}</div>
          <div class="yellow"></div>
        </section>
      </div>
      <div></div>
      <section>
        <div class="doc-tabs"><div class="doc-tab">${small('Multiple Files - My New Project (More text for translation.docx.sdlxliff. This i...) [Translation]*', 299, 'blue')}</div><span class="end">${caret}${icon('close', 6)}</span></div>
        <div class="sheet">
          <div class="segs">${SEGMENTS.map((s, i) => this.segment(s, i))}</div>
          <div class="scroll"><div>${icon('chevUp', 6, 5)}</div><span></span><div>${icon('chevDown', 6, 5)}</div></div>
          <i class="mark"></i>
        </div>
      </section>
    </main>`;
  }

  right() {
    return html`<aside class="right">
      <section class="pane">
        ${this.caption('Term Recognition', 58)}
        <div class="bar rec">${icon('bookOpen', 11, 9)}${icon('azGray', 9)}${icon('azGear', 9)}${icon('azGreen', 9)}</div>
        <div class="list"><div class="hit">${small('some', 17)}${small('Nora General Termbase', 77)}</div><div class="sub">${small('algunos', 25)}</div></div>
      </section>
      <div class="foot rt"><div class="sel">${icon('term', 8)}${fit('Term Recognition', 59, 'blue')}</div><div class="find">${icon('termSearch', 9)}${fit('Termbase Search', 59)}</div></div>
      <div></div>
      <section class="pane">
        ${this.caption('Termbase Viewer', 58)}
        <div class="bar view">${fit('Default layout', 50)}<span class="c1">${caret}</span><span class="c2">${caret}</span>${icon('pageX', 10)}</div>
      </section>
      <div class="foot bt">
        <div class="sel view">${icon('viewer', 8)}${small('Termbase Vi...', 46, 'blue')}</div>
        <div class="com">${icon('note', 8)}${small('Comments(0)', 45)}</div>
        <div class="qa">${icon('tqa', 7, 9)}${small('TQAs (0)', 30)}</div>
        <div class="msg">${icon('message', 9)}${small('Messages (0)', 45)}</div>
        <div class="frag">${icon('fragment', 8, 7)}${small('Fragment M...', 43)}</div>
      </div>
    </aside>`;
  }

  render() {
    return html`
      ${this.top()}
      <div class="work">
        ${this.side()}${this.middle()}${this.right()}
        <div class="strip">
          <div class="vtab">${icon('bell', 7)}<span class="vt blue">Notifications</span></div>
          <div class="vtab">${icon('tips', 7, 10)}<span class="vt blue">Useful Tips</span></div>
        </div>
      </div>
      <footer class="statusbar">
        <div class="ticks"><i></i><i></i></div>
        <div class="cell">${icon('filter', 9)}${small('All segments', 43)}</div>
        <div class="cell ins">${small('INS', 13)}</div>
        <div class="cell">${icon('page', 9)}${small('85 (82.52%)', 40)}</div>
        <div class="cell">${icon('confirm', 10)}${small('18 (17.48%)', 40)}</div>
        <div class="cell">${icon('chars', 9)}${small('Chars: 0', 29)}</div>
        <div class="cell qa">${icon('tqa', 6, 9)}${small('0/459', 19)}</div>
        <div class="cell">${icon('us', 10, 8)}${icon('flagArrow', 8, 8)}${icon('mx', 9, 8)}</div>
      </footer>
      <i class="halo"></i>
      <svg class="beam" width="6" height="12"><path d="M1 1h1.5L3 1.5 3.5 1H5M3 1.5v9M1 11h1.5l.5-.5.5.5H5" fill="none" stroke="#333"/></svg>
    `;
  }
}
